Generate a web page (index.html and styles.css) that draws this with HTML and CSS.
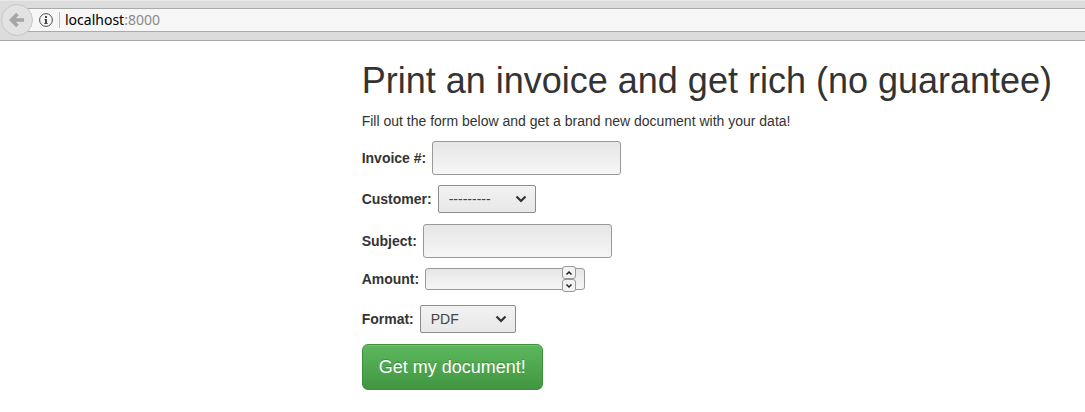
FILE: index.html
```html
<!DOCTYPE html>
<html lang="en">
<head>
<meta charset="utf-8">
<title>Print an invoice</title>
<link rel="stylesheet" href="styles.css">
</head>
<body>
<header class="toolbar">
  <div class="urlbar">
    <button class="back" type="button" aria-label="Back">
      <svg width="16" height="16" viewBox="0 0 16 16"><path d="M8.5 2 2.5 8l6 6M3 8h12" fill="none" stroke="currentColor" stroke-width="3.6"/></svg>
    </button>
    <svg class="info" width="14" height="14" viewBox="0 0 14 14"><circle cx="7" cy="7" r="6.4" fill="none" stroke="currentColor" stroke-width="1"/><path d="M6 3h2v2H6zM5.500 6H8v4h.7v1H5.300v-1H6V7h-.5z" fill="currentColor"/></svg>
    <span class="divider"></span>
    <span class="address">localhost<span class="port">:8000</span></span>
  </div>
</header>
<main class="page">
  <h1 class="title">Print an invoice and get rich (no guarantee)</h1>
  <p class="lead">Fill out the form below and get a brand new document with your data!</p>
  <form class="form">
    <div class="row">
      <label for="invoice">Invoice #:</label>
      <input class="field" id="invoice" type="text">
    </div>
    <div class="row row-select">
      <label for="customer">Customer:</label>
      <span class="picker">
        <select class="select select-wide" id="customer"><option>---------</option></select>
        <svg class="chevron" width="12" height="8" viewBox="0 0 12 8"><path d="M1.5 1.5 6 6l4.5-4.5" fill="none" stroke="currentColor" stroke-width="2.2"/></svg>
      </span>
    </div>
    <div class="row">
      <label for="subject">Subject:</label>
      <input class="field" id="subject" type="text">
    </div>
    <div class="row row-amount">
      <label for="amount">Amount:</label>
      <span class="number">
        <input class="field field-number" id="amount" type="number">
        <span class="spinner">
          <button class="step" type="button" aria-label="Increase"><svg width="8" height="6" viewBox="0 0 8 6"><path d="M1.5 4.500 4 2l2.5 2.5" fill="none" stroke="currentColor" stroke-width="1.5"/></svg></button>
          <button class="step" type="button" aria-label="Decrease"><svg width="8" height="6" viewBox="0 0 8 6"><path d="M1.5 1.5 4 4l2.5-2.5" fill="none" stroke="currentColor" stroke-width="1.5"/></svg></button>
        </span>
      </span>
    </div>
    <div class="row row-select">
      <label for="format">Format:</label>
      <span class="picker">
        <select class="select" id="format"><option>PDF</option></select>
        <svg class="chevron" width="12" height="8" viewBox="0 0 12 8"><path d="M1.5 1.5 6 6l4.5-4.5" fill="none" stroke="currentColor" stroke-width="2.2"/></svg>
      </span>
    </div>
    <button class="submit" type="submit">Get my document!</button>
  </form>
</main>
</body>
</html>
```
FILE: styles.css
```css
* { box-sizing: border-box; }
body {
  margin: 0;
  background: #fff;
  color: #333;
  font: 14px/20px "Liberation Sans", Arial, sans-serif;
}
.toolbar {
  padding: 7px 0 8px 17px;
  background: #dcdcdc;
  border-top: 1px solid #e8e8e8;
  border-bottom: 1px solid #aaa;
}
.urlbar {
  position: relative;
  display: flex;
  align-items: center;
  height: 24px;
  padding-left: 22px;
  background: #f7f7f7;
  border: solid #aaa;
  border-width: 1px 0;
}
.back {
  position: absolute;
  left: -16px;
  top: -5px;
  display: flex;
  align-items: center;
  justify-content: center;
  width: 32px;
  height: 32px;
  padding: 0;
  color: #a5a5a5;
  background: #e2e2e2;
  border: 1px solid #c6c6c6;
  border-radius: 50%;
}
.info { color: #4a4a4a; }
.divider {
  width: 1px;
  height: 16px;
  margin: 0 5px 0 6px;
  background: #bbb;
}
.address {
  color: #000;
  font: 14px/20px "Noto Sans", sans-serif;
}
.port { color: #8a8a8a; }
.page { padding: 20px 0 22px 33.333%; }
.title {
  margin: 0 0 10px;
  font-size: 36px;
  font-weight: 400;
  line-height: 40px;
  white-space: nowrap;
}
.lead { margin: 0 0 10px; }
.form {
  display: flex;
  flex-direction: column;
  align-items: flex-start;
  gap: 10px;
}
.row {
  display: flex;
  align-items: center;
  gap: 6px;
}
.row-select { padding-bottom: 1px; }
.row-amount { padding-bottom: 5px; }
label { font-weight: 700; }
.field {
  display: block;
  width: 189px;
  height: 34px;
  padding: 0 8px;
  font: inherit;
  color: inherit;
  background: linear-gradient(#e6e6e6, #f6f6f6);
  border: 1px solid #999;
  border-radius: 3px;
}
.field-number {
  width: 160px;
  height: 22px;
  appearance: textfield;
}
.number, .picker { position: relative; }
.spinner {
  position: absolute;
  right: 9px;
  top: -2px;
  display: flex;
  flex-direction: column;
}
.step {
  display: flex;
  align-items: center;
  justify-content: center;
  width: 14px;
  height: 13px;
  padding: 0;
  color: #222;
  background: #f2f2f2;
  border: 1px solid #999;
  border-radius: 3px;
}
.select {
  display: block;
  appearance: none;
  width: 96px;
  height: 28px;
  padding: 0 10px;
  font: inherit;
  color: #444;
  background: linear-gradient(#f2f2f2, #e8e8e8);
  border: 1px solid #8c8c8c;
  border-radius: 2px;
}
.select-wide { width: 98px; }
.chevron {
  position: absolute;
  right: 9px;
  top: 10px;
  color: #333;
  pointer-events: none;
}
.submit {
  height: 46px;
  padding: 0 16px;
  font: 18px/24px "Liberation Sans", Arial, sans-serif;
  color: #fff;
  text-shadow: 0 -1px 0 rgba(0, 0, 0, .2);
  background: linear-gradient(#5cb85c, #419641);
  border: 1px solid #3e8f3e;
  border-radius: 6px;
  box-shadow: inset 0 1px 0 rgba(255, 255, 255, .15);
}
```
